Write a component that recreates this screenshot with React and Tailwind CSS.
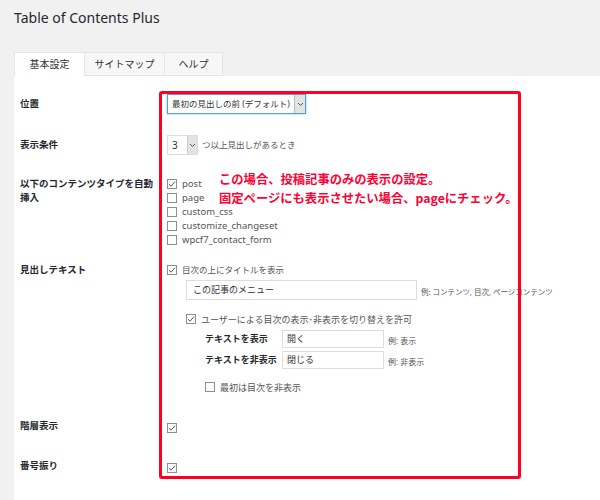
import React from 'react';

const font = { fontFamily: '"Noto Sans", "Noto Sans CJK JP", sans-serif' };

function Check({ checked }) {
  return (
    <span className="inline-flex items-center justify-center w-[10px] h-[10px] border border-[#8c8f94] bg-white shrink-0">
      {checked && (
        <svg width="8" height="8" viewBox="0 0 8 8" fill="none">
          <path d="M1 4.2L3.1 6.2L7 1.6" stroke="#555" strokeWidth="1" />
        </svg>
      )}
    </span>
  );
}

function CheckRow({ checked, children, className = '', size = 'text-[9.5px]' }) {
  return (
    <div className={`flex items-center h-[14px] gap-[5px] ${className}`}>
      <Check checked={checked} />
      <span className={`${size} text-[#555] leading-none whitespace-nowrap`}>{children}</span>
    </div>
  );
}

function Caret() {
  return (
    <svg width="7" height="5" viewBox="0 0 7 5" fill="none">
      <path d="M1 1L3.5 3.5L6 1" stroke="#555" strokeWidth="1" />
    </svg>
  );
}

function Label({ children }) {
  return <div className="w-[147px] shrink-0 pl-[6px] text-[9.5px] font-bold text-[#23282d] leading-[14px] whitespace-nowrap">{children}</div>;
}

export default function App() {
  return (
    <div className="relative w-[600px] h-[500px] bg-[#f1f1f1] overflow-hidden pl-[14px]" style={font}>
      <h1 className="pt-[8px] h-[52px] text-[14px] text-[#23282d] font-normal leading-[20px]">Table of Contents Plus</h1>

      {/* tabs */}
      <div className="flex h-[24px] text-[10px] text-[#333]">
        <div className="w-[71px] bg-white border border-b-0 border-[#e5e5e5] flex items-center justify-center">基本設定</div>
        <div className="w-[80px] bg-[#f7f7f7] border border-l-0 border-[#e5e5e5] flex items-center justify-center">サイトマップ</div>
        <div className="w-[58px] bg-[#f7f7f7] border border-l-0 border-[#e5e5e5] flex items-center justify-center">ヘルプ</div>
      </div>

      <div className="bg-white h-[424px] flex flex-col">
        {/* 位置 */}
        <div className="flex items-center mt-[18px] h-[20px]">
          <Label>位置</Label>
          <div className="flex h-[20px] border border-[#5b9dd9] ml-[6px] shadow-[0_0_2px_rgba(30,140,190,0.6)]">
            <div className="w-[126px] px-[4px] flex items-center text-[8.5px] text-[#333] whitespace-nowrap">最初の見出しの前 (デフォルト)</div>
            <div className="w-[11px] bg-[#e3e3e3] border-l border-[#bbb] flex items-center justify-center"><Caret /></div>
          </div>
        </div>

        {/* 表示条件 */}
        <div className="flex items-center mt-[21px] h-[20px]">
          <Label>表示条件</Label>
          <div className="flex h-[20px] border border-[#ddd] ml-[6px]">
            <div className="w-[19px] px-[4px] flex items-center text-[10px] text-[#333]">3</div>
            <div className="w-[10px] bg-[#e3e3e3] border-l border-[#ccc] flex items-center justify-center"><Caret /></div>
          </div>
          <span className="ml-[4px] text-[8.5px] text-[#555] whitespace-nowrap">つ以上見出しがあるとき</span>
        </div>

        {/* content types */}
        <div className="flex mt-[22px]">
          <Label>以下のコンテンツタイプを自動<br />挿入</Label>
          <div className="ml-[6px] flex flex-col">
            <CheckRow checked>post</CheckRow>
            <CheckRow>page</CheckRow>
            <CheckRow>custom_css</CheckRow>
            <CheckRow>customize_changeset</CheckRow>
            <CheckRow>wpcf7_contact_form</CheckRow>
          </div>
        </div>

        {/* 見出しテキスト */}
        <div className="flex mt-[16px]">
          <Label>見出しテキスト</Label>
          <div className="ml-[6px] flex flex-col">
            <CheckRow checked size="text-[8.5px]">目次の上にタイトルを表示</CheckRow>
            <div className="flex items-center mt-[3px] ml-[19px]">
              <div className="w-[231px] h-[20px] border border-[#ddd] px-[6px] flex items-center text-[9px] text-[#333]">この記事のメニュー</div>
              <span className="ml-[4px] mt-[6px] text-[7.5px] text-[#555] whitespace-nowrap">例: コンテンツ, 目次, ページコンテンツ</span>
            </div>
            <CheckRow checked size="text-[9px]" className="mt-[12px] ml-[19px]">ユーザーによる目次の表示･非表示を切り替えを許可</CheckRow>
            <div className="flex items-center mt-[4px] ml-[38px]">
              <span className="w-[77px] text-[9px] font-bold text-[#23282d] whitespace-nowrap">テキストを表示</span>
              <div className="w-[102px] h-[18px] border border-[#ddd] px-[4px] flex items-center text-[9px] text-[#333]">開く</div>
              <span className="ml-[4px] mt-[4px] text-[8px] text-[#555] whitespace-nowrap">例: 表示</span>
            </div>
            <div className="flex items-center mt-[3px] ml-[38px]">
              <span className="w-[77px] text-[9px] font-bold text-[#23282d] whitespace-nowrap">テキストを非表示</span>
              <div className="w-[102px] h-[18px] border border-[#ddd] px-[4px] flex items-center text-[9px] text-[#333]">閉じる</div>
              <span className="ml-[4px] mt-[4px] text-[8px] text-[#555] whitespace-nowrap">例: 非表示</span>
            </div>
            <CheckRow size="text-[9px]" className="mt-[11px] ml-[38px]">最初は目次を非表示</CheckRow>
          </div>
        </div>

        <div className="flex items-center mt-[25px] h-[14px]">
          <Label>階層表示</Label>
          <div className="ml-[6px]"><Check checked /></div>
        </div>

        <div className="flex items-center mt-[26px] h-[14px]">
          <Label>番号振り</Label>
          <div className="ml-[6px]"><Check checked /></div>
        </div>
      </div>

      {/* red annotation */}
      <div className="absolute left-[159px] top-[91px] w-[362px] h-[388px] border-[3px] border-[#ff0022] rounded-[3px] pointer-events-none" />
      <div className="absolute left-[219px] top-[170px] text-[12.3px] font-bold text-[#ff0033] leading-[19px] whitespace-nowrap" style={{ fontFamily: '"Noto Sans CJK JP", sans-serif' }}>
        <div>この場合、投稿記事のみの表示の設定。</div>
        <div>固定ページにも表示させたい場合、pageにチェック。</div>
      </div>
    </div>
  );
}
